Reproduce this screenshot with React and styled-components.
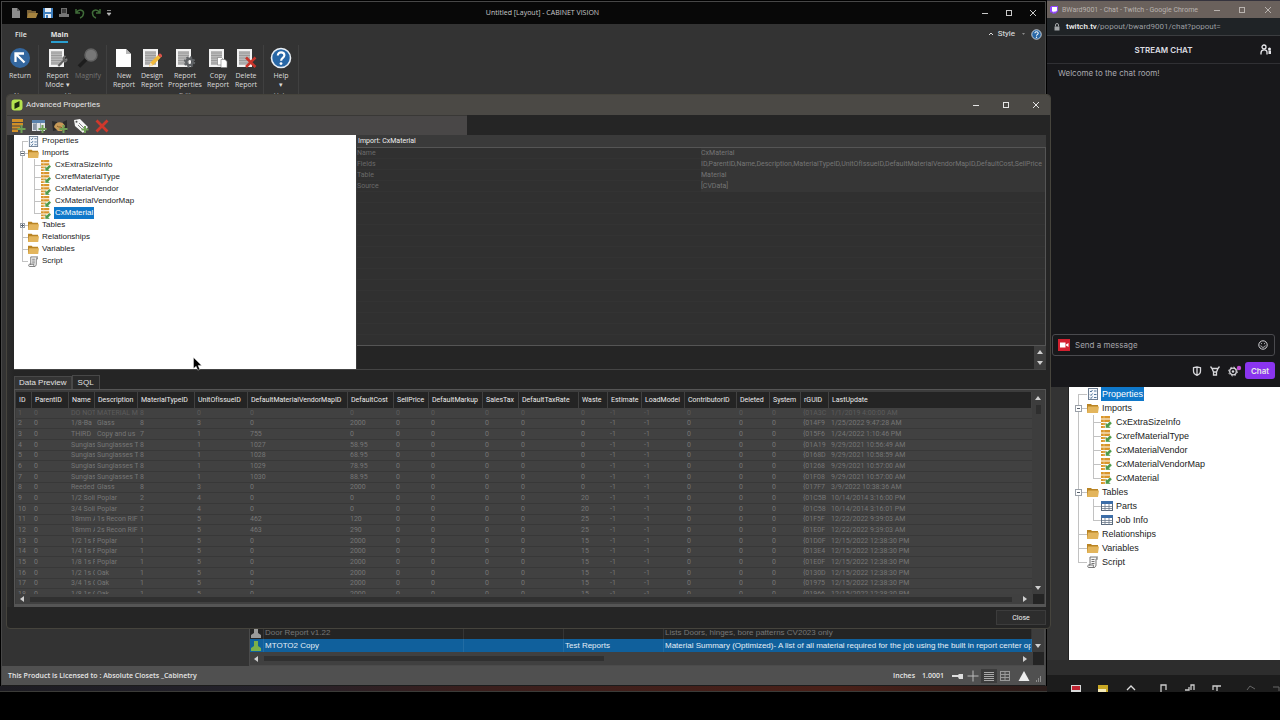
import React from "react";
import styled, { createGlobalStyle, css } from "styled-components";

const Global = createGlobalStyle`
  * { box-sizing: border-box; }
  body { margin: 0; background: #000; font-family: Roboto, "Liberation Sans", sans-serif; font-size: 8px; line-height: 10px; }
  button, input { font: inherit; color: inherit; background: none; border: 0; padding: 0; margin: 0; }
  ul { list-style: none; margin: 0; padding: 0; }
  svg { display: block; flex: none; }
`;

/* ---------- desktop ---------- */
const Desktop = styled.div`
  min-height: 100vh;
  display: flex;
  flex-direction: column;
  background: #000;
  color: #e6e6e6;
  overflow: hidden;
  padding-bottom: 28px;
`;
const Windows = styled.div`
  flex: 1;
  display: flex;
  min-height: 690px;
`;
const LeftSide = styled.div`
  flex: 1;
  min-width: 0;
  display: flex;
  flex-direction: column;
`;
const RightSide = styled.div`
  width: 233px;
  display: flex;
  flex-direction: column;
  background: #333;
`;
const Wallpaper = styled.div`
  height: 6px;
  background: linear-gradient(90deg, #1d1c22, #24222b 25%, #3a1f1d 45%, #4a2018 80%, #2a1c1a);
  border-bottom: 1px solid #3b3b38;
`;

/* ---------- application window ---------- */
const AppWindow = styled.section`
  position: relative;
  flex: 1;
  display: flex;
  flex-direction: column;
  margin: 1px 1px 0;
  border: 1px solid #474747;
  border-bottom-color: #1c1c1c;
  background: #333;
`;
const TitleBar = styled.header`
  height: 22px;
  display: flex;
  align-items: center;
  background: #080808;
  color: #c8c8c8;
  padding-left: 8px;
`;
const QuickBar = styled.div`
  display: flex;
  align-items: center;
  gap: 4px;
`;
const WindowTitle = styled.h1`
  flex: 1;
  margin: 0;
  text-align: center;
  font-family: "Open Sans", sans-serif;
  font-size: 7px;
  font-weight: 400;
`;
const WindowButtons = styled.div`
  display: flex;
`;
const GlyphButton = styled.button`
  width: ${(p) => p.$w || 12}px;
  height: 12px;
  display: flex;
  align-items: center;
  justify-content: center;
`;
const RibbonTabs = styled.nav`
  height: 21px;
  display: flex;
  align-items: flex-end;
  padding: 0 3px 2px 13px;
  font-family: "Open Sans", sans-serif;
  font-size: 7px;
`;
const RibbonTab = styled.button`
  height: 16px;
  margin-right: 24px;
  padding-top: 2px;
  font-weight: ${(p) => (p.$active ? 700 : 600)};
  border-bottom: 2px solid ${(p) => (p.$active ? "#2b9fd0" : "transparent")};
`;
const RibbonTools = styled.div`
  margin-left: auto;
  display: flex;
  align-items: center;
  gap: 4px;
  height: 18px;
`;
const StyleButton = styled.button`
  font-family: Roboto, sans-serif;
  font-size: 8px;
`;
const Ribbon = styled.div`
  display: flex;
  height: 56px;
`;
const RibbonGroup = styled.div`
  display: flex;
  flex-direction: column;
  padding: 2px 3px 0;
  border-right: 1px solid #404040;
`;
const RibbonRow = styled.div`
  display: flex;
  height: 44px;
`;
const GroupName = styled.span`
  text-align: center;
  font-size: 7px;
  line-height: 10px;
  color: #aaa;
`;
const RibbonButton = styled.button`
  width: ${(p) => p.$w}px;
  display: flex;
  flex-direction: column;
  align-items: center;
  gap: 2px;
  font-family: "Open Sans", sans-serif;
  font-size: 7px;
  line-height: 9px;
  white-space: pre;
  color: ${(p) => (p.disabled ? "#747474" : "#dcdcdc")};
`;

/* ---------- report list and status bar ---------- */
const Workspace = styled.div`
  flex: 1;
  display: flex;
  flex-direction: column;
  justify-content: flex-end;
`;
const ReportList = styled.div`
  margin-left: 247px;
  border: 1px solid #4b4b4b;
  background: #262626;
`;
const ReportBody = styled.div`
  display: flex;
`;
const ReportTable = styled.table`
  width: 100%;
  min-width: 0;
  table-layout: fixed;
  border-collapse: separate;
  border-spacing: 0;
  font-family: "Liberation Sans", sans-serif;
  font-size: 8px;
`;
const ReportRow = styled.tr`
  height: 13px;
  background: ${(p) => (p.$selected ? "#10609c" : "#242424")};
  color: ${(p) => (p.$selected ? "#e4eef6" : "#777")};
`;
const ReportCell = styled.td`
  width: ${(p) => (p.$w ? p.$w + "px" : "auto")};
  padding: 0 1px;
  white-space: nowrap;
  overflow: hidden;
  border-right: 1px solid rgba(255, 255, 255, 0.08);
`;
const StatusBar = styled.footer`
  height: 19px;
  display: flex;
  align-items: center;
  gap: 7px;
  padding: 0 2px 0 6px;
  background: #505050;
  font-family: "Open Sans", sans-serif;
  font-size: 7px;
  font-weight: 600;
`;
const Spacer = styled.span`
  flex: 1;
`;

/* ---------- scroll bars ---------- */
const VBar = styled.div`
  width: 12px;
  flex: none;
  display: flex;
  flex-direction: column;
  align-items: center;
  justify-content: space-between;
  padding: 3px 0;
  background: #3d3d3d;
`;
const HBar = styled.div`
  height: ${(p) => p.$h}px;
  display: flex;
  align-items: center;
  gap: 5px;
  padding-left: 3px;
  background: #404040;
`;
const HThumb = styled.div`
  width: ${(p) => p.$w};
  height: 5px;
  background: #303030;
`;
const Corner = styled.div`
  width: 11px;
  height: 100%;
  background: #242424;
`;
const VThumb = styled.div`
  width: 5px;
  height: 9px;
  background: #2e2e2e;
  margin: 4px 0 auto;
`;

/* ---------- dialog ---------- */
const Dialog = styled.section`
  position: absolute;
  top: 92px;
  bottom: 56px;
  left: 4px;
  right: -6px;
  display: flex;
  flex-direction: column;
  border: 1px solid #46443d;
  border-radius: 4px;
  background: #252525;
  overflow: hidden;
`;
const DialogTitle = styled.header`
  height: 20px;
  display: flex;
  align-items: center;
  gap: 3px;
  padding-left: 4px;
  background: #4b4945;
`;
const DialogToolbar = styled.div`
  height: 20px;
  display: flex;
  align-items: center;
  gap: 5px;
  width: 460px;
  padding: 0 3px;
  background: #494747;
  border-top: 1px solid #393836;
`;
const DialogBody = styled.div`
  flex: 1;
  min-height: 0;
  display: flex;
  flex-direction: column;
  padding: 0 4px 0 7px;
  gap: 5px;
  background: linear-gradient(90deg, #2c2c2c 0, #252525 7px);
`;
const Split = styled.div`
  flex: 1;
  min-height: 0;
  display: grid;
  grid-template-columns: 342px 1fr;
  border-bottom: 1px solid #444;
`;
const TreePane = styled.div`
  background: #fff;
  color: #1c1c1c;
`;
const PropertyPane = styled.div`
  min-width: 0;
  display: flex;
  flex-direction: column;
  background: #3a3a3a;
  padding-left: 1px;
`;
const PropertyHead = styled.h2`
  margin: 0;
  padding: 0 1px;
  font-size: 7px;
  font-weight: 400;
  line-height: 12px;
  color: #f0f0f0;
`;
const PropertySheet = styled.div`
  flex: 1;
  border: 1px solid #555;
  border-left: 0;
  background: repeating-linear-gradient(#303030 0 10px, #333 10px 11px);
`;
const PropertyList = styled.dl`
  margin: 0;
  display: grid;
  grid-template-columns: 1fr 1fr;
  font-size: 7px;
  line-height: 11px;
  color: #757575;
`;
const PropertyName = styled.dt`
  color: #6a6a6a;
  height: 11px;
`;
const PropertyValue = styled.dd`
  margin: 0;
  height: 11px;
  white-space: nowrap;
  overflow: hidden;
  background: #363636;
`;
const PropertyHelp = styled.div`
  height: 23px;
  display: flex;
  justify-content: flex-end;
  background: #252525;
`;
const TabStrip = styled.div`
  height: 14px;
  display: flex;
  align-items: flex-end;
`;
const Tab = styled.button`
  height: ${(p) => (p.$active ? 13 : 14)}px;
  padding: 0 ${(p) => (p.$active ? 4 : 5)}px;
  border: 1px solid #484848;
  border-bottom: 0;
  background: ${(p) => (p.$active ? "#343434" : "#2a2a2a")};
  font-family: "Liberation Sans", sans-serif;
  color: #e2e2e2;
`;
const GridFrame = styled.div`
  border: 1px solid #555;
  border-bottom-width: 3px;
  background: #3c3c3c;
  padding: 2px 1px 0;
`;
const GridView = styled.div`
  display: flex;
  height: 202px;
  overflow: hidden;
`;
const DataTable = styled.table`
  width: 100%;
  min-width: 0;
  align-self: flex-start;
  table-layout: fixed;
  border-collapse: separate;
  border-spacing: 0;
  font-size: 7px;
  line-height: 9px;
  background: #414141;
`;
const HeadCell = styled.th`
  width: ${(p) => (p.$w ? p.$w + "px" : "auto")};
  height: 16px;
  padding: 0 0 0 3px;
  text-align: left;
  font-weight: 400;
  white-space: nowrap;
  background: #242424;
  border-right: 1px solid #414141;
  color: #ececec;
`;
const DataRow = styled.tr`
  height: 11px;
  color: ${(p) => (p.$dim ? "#5c5c5c" : "#767676")};
  &:nth-child(3n + 2) { height: 10px; }
`;
const DataCell = styled.td`
  padding: 0 1px 0 2px;
  white-space: nowrap;
  overflow: hidden;
  border-bottom: 1px solid #383838;
`;
const DialogFooter = styled.footer`
  height: 21px;
  display: flex;
  align-items: center;
  justify-content: flex-end;
  padding-right: 4px;
`;
const CloseButton = styled.button`
  width: 50px;
  height: 15px;
  border: 1px solid #3c3c3c;
  background: #2d2d2d;
  font-size: 7px;
  color: #f0f0f0;
`;
const Pointer = styled.svg`
  position: absolute;
  left: 191px;
  top: 355px;
`;

/* ---------- tree ---------- */
const line = "linear-gradient(#c2c2c2, #c2c2c2)";
const Tree = styled.ul`
  font-family: "Liberation Sans", sans-serif;
  font-size: ${(p) => (p.$large ? 9 : 8)}px;
  line-height: ${(p) => (p.$large ? 14 : 12)}px;
`;
const TreeRow = styled.li`
  display: flex;
  align-items: center;
  height: ${(p) => (p.$large ? 14 : 12)}px;
`;
const Gutter = styled.span`
  height: 100%;
  flex: none;
  display: flex;
  align-items: center;
  width: ${(p) => (p.$child ? (p.$large ? 14 : 13) : p.$large ? 18 : 14)}px;
  padding-left: 6px;
  ${(p) => {
    const x = p.$child ? 6 : p.$large ? 9 : 8;
    const v = p.$part === "first" ? `${x}px 100% / 1px 50%` : p.$part === "last" ? `${x}px 0 / 1px 50%` : `${x}px 0 / 1px 100%`;
    return css`
      background: ${line} ${v} no-repeat${p.$branch ? `, ${line} ${x}px 50% / 20px 1px no-repeat` : ""};
    `;
  }}
`;
const Toggle = styled.button`
  width: ${(p) => (p.$large ? 7 : 5)}px;
  height: ${(p) => (p.$large ? 7 : 5)}px;
  border: 1px solid #9aa0a8;
  background: linear-gradient(#56606c, #56606c) center / 3px 1px no-repeat,
    ${(p) => (p.$open ? "" : "linear-gradient(#56606c, #56606c) center / 1px 3px no-repeat,")} #fff;
`;
const TreeLabel = styled.span`
  margin-left: 2px;
  padding: 0 1px;
  ${(p) =>
    p.$selected &&
    css`
      background: #0f78ca;
      color: #fff;
    `}
`;

/* ---------- chat window ---------- */
const ChatWindow = styled.section`
  flex: 1;
  display: flex;
  flex-direction: column;
  background: #18181b;
  font-family: Inter, sans-serif;
`;
const ChatTitle = styled.header`
  height: 18px;
  display: flex;
  align-items: center;
  gap: 4px;
  padding-left: 3px;
  background: #6a615c;
  border-top: 1px solid #35333d;
  font-family: Roboto, sans-serif;
  font-size: 7px;
  color: #b9b3af;
  white-space: nowrap;
`;
const Address = styled.div`
  height: 18px;
  display: flex;
  align-items: center;
  gap: 6px;
  padding: 0 7px;
  background: #1f2326;
  border-bottom: 1px solid #3b3d40;
  font-family: Roboto, sans-serif;
  color: #9a9da0;
  b { color: #f1f1f1; font-weight: 500; }
`;
const ChatHeader = styled.div`
  height: 28px;
  display: grid;
  grid-template-columns: 1fr auto 1fr;
  align-items: center;
  padding: 0 8px;
  border-bottom: 1px solid #303034;
  h2 { margin: 0; font-size: 8px; font-weight: 600; color: #dedee3; }
  button { justify-self: end; }
`;
const ChatLog = styled.div`
  flex: 1;
  padding: 4px 11px;
  color: #a9a9b0;
`;
const MessageBox = styled.label`
  display: flex;
  align-items: center;
  gap: 5px;
  height: 22px;
  margin: 0 5px;
  padding: 0 6px 0 5px;
  border: 1px solid #4a4a4e;
  border-radius: 3px;
  input { flex: 1; min-width: 0; outline: 0; }
  input::placeholder { color: #a4a4aa; opacity: 1; }
`;
const ChatActions = styled.div`
  display: flex;
  align-items: center;
  justify-content: flex-end;
  gap: 8px;
  padding: 6px 5px 8px;
`;
const ChatButton = styled.button`
  width: 30px;
  height: 17px;
  margin-left: -6px;
  border-radius: 3px;
  background: #8a34ef;
  font-weight: 600;
`;
const BackTree = styled.section`
  height: 273px;
  margin-left: 21px;
  border-left: 1px solid #222;
  background: #fff;
  color: #1c1c1c;
`;
const DockGap = styled.div`
  height: 15px;
  background: #2d2d2d;
`;
const Dock = styled.div`
  height: 17px;
  display: flex;
  align-items: flex-end;
  padding-left: 24px;
  background: #1c1c1c;
  overflow: hidden;
`;

/* ---------- drawings ---------- */
const Folder = ({ s }) => (
  <svg width={s} height={s} viewBox="0 0 12 12">
    <path d="M0 2h4l1 1h6v8H0z" fill="#b98424" />
    <path d="M1 4.500h11l-1 6.500H0z" fill="#e3b55c" />
  </svg>
);
const PropsIcon = ({ s }) => (
  <svg width={s} height={s} viewBox="0 0 12 12" fill="none">
    <rect x="1.500" y="0.500" width="9" height="11" fill="#f4f7fb" stroke="#6f7f93" />
    <path d="M3 3l1 1 1.500-2M3 6.500l1 1L5.500 5.500M3 9.500l1 1L5.500 8.500M7 3h2.500M7 6.500h2.500M7 9.500h2.500" stroke="#3f6790" strokeWidth="0.900" />
  </svg>
);
const ImportIcon = ({ s }) => (
  <svg width={s} height={s} viewBox="0 0 12 12">
    <path d="M0 0h9v2.500H0zM0 3.500h9V6H0zM0 7h6v2H0zM0 10h4v2H0z" fill="#d9952b" />
    <path d="M3 0v12" stroke="#f5d9a3" strokeWidth="0.500" />
    <path d="M4.500 12V6.500l1.600 1.600L9 5.200 11 7.200 8.200 10.300 9.900 12z" fill="#4e9a4a" stroke="#fff" strokeWidth="0.400" />
  </svg>
);
const TableIcon = ({ s }) => (
  <svg width={s} height={s} viewBox="0 0 12 12" fill="none">
    <rect x="0.500" y="1.500" width="11" height="9" fill="#fff" stroke="#5a6a7c" />
    <path d="M0 1h12v3H0z" fill="#3d6ea8" />
    <path d="M4 4v7M8 4v7M1 6.500h10M1 8.500h10" stroke="#6c7a8a" strokeWidth="0.800" />
  </svg>
);
const ScriptIcon = ({ s }) => (
  <svg width={s} height={s} viewBox="0 0 12 12" fill="none" stroke="#666" strokeWidth="0.900">
    <path d="M3 1h7.500c-1 0-1 2 0 2H9v6c0 1.500-1 2.500-2 2.500H1.500C.5 11.500.5 9 1.500 9H3z" fill="#f6f6f6" />
    <path d="M4.500 3.500h3M4.500 5.500h3M4.500 7.500h3M2 9h4.500c-.5 1 0 2.500.8 2.500" />
  </svg>
);
const treeIcons = { props: PropsIcon, folder: Folder, import: ImportIcon, table: TableIcon, script: ScriptIcon };

const Arrow = ({ dir, c = "#cfcfcf" }) => {
  const d = { up: "M0 5l3-4 3 4z", down: "M0 1l3 4 3-4z", left: "M5 0L1 3l4 3z", right: "M1 0l4 3-4 3z" }[dir];
  return (
    <svg width="6" height="6" viewBox="0 0 6 6"><path d={d} fill={c} /></svg>
  );
};
const MinGlyph = () => <svg width="8" height="8" viewBox="0 0 8 8"><path d="M1 4.500h6" stroke="currentColor" /></svg>;
const MaxGlyph = () => <svg width="8" height="8" viewBox="0 0 8 8"><rect x="1.500" y="1.500" width="5" height="5" fill="none" stroke="currentColor" /></svg>;
const CloseGlyph = () => <svg width="8" height="8" viewBox="0 0 8 8"><path d="M1 1l6 6M7 1L1 7" stroke="currentColor" /></svg>;

const ReportSheet = ({ children }) => (
  <svg width="22" height="22" viewBox="0 0 22 22" fill="none">
    <path d="M2 2h15v18H2z" fill="#f2f2f2" />
    <path d="M4 4h11v14H4z" fill="#b9b9b9" />
    <path d="M4 6h11M4 8.500h11M4 11h11M4 13.500h11M4 16h11" stroke="#929292" strokeWidth="0.800" />
    {children}
  </svg>
);
const ReturnIcon = () => (
  <svg width="22" height="22" viewBox="0 0 22 22" fill="none">
    <circle cx="11" cy="11" r="10" fill="#34679f" />
    <path d="M6.500 15V6.500H15M7 7l8.500 8.500" stroke="#fff" strokeWidth="2.300" />
  </svg>
);
const Wrench = () => <path d="M10.500 18l5-5c-1-2.500 1-4.500 3-4l-1.500 2 1 1.500 2-.8c.6 2.300-1.300 4-3.300 3.300L12 20z" fill="#5f5f5f" stroke="#ddd" strokeWidth="0.300" />;
const Pencil = () => (
  <g>
    <path d="M8 19.500l1.500-4L17 8l2.800 2.600-7.800 7.700z" fill="#f1b93a" />
    <path d="M17 8l1.300-1.300c1-.8 3.200 1 2.700 2.500l-1.200 1.400z" fill="#d9534a" />
    <path d="M8 19.500l1.500-4 2.500 2.800z" fill="#f6dfb5" />
  </g>
);
const Gear = () => (
  <g>
    <circle cx="15.500" cy="15" r="3.200" stroke="#5f6265" strokeWidth="2.600" />
    <circle cx="15.500" cy="15" r="4.900" stroke="#5f6265" strokeWidth="1.600" strokeDasharray="2 1.850" />
  </g>
);
const Copies = () => (
  <g fill="#fff" stroke="#777" strokeWidth="0.600">
    <path d="M10.500 10.500h4l1.500 1.500v6h-5.500z" />
    <path d="M14 12.500h4l2 2v6h-6z" />
  </g>
);
const Cross = () => <path d="M11 10.500l9.500 9.500M20.500 10.500L11 20" stroke="#c8352b" strokeWidth="2.600" />;
const NewIcon = () => (
  <svg width="22" height="22" viewBox="0 0 22 22">
    <path d="M3 2h10l5 5v13H3z" fill="#fff" /><path d="M13 2v5h5z" fill="#b8b8b8" />
  </svg>
);
const MagnifyIcon = () => (
  <svg width="22" height="22" viewBox="0 0 22 22" fill="none">
    <path d="M2 19.500l7-7" stroke="#1d1d1d" strokeWidth="3.500" />
    <circle cx="14" cy="8" r="6" fill="#777" stroke="#626262" strokeWidth="1.500" />
  </svg>
);
const HelpIcon = ({ s }) => (
  <svg width={s} height={s} viewBox="0 0 22 22" fill="none">
    <circle cx="11" cy="11" r="9.500" fill="#2867a6" stroke="#e9eff5" strokeWidth="1.600" />
    <path d="M7.800 8.500c0-4.300 6.600-4 6.600-.2 0 2.500-3.300 2.600-3.300 5.400" stroke="#fff" strokeWidth="2.100" />
    <circle cx="11" cy="16.600" r="1.400" fill="#fff" />
  </svg>
);
const Small = ({ children }) => <svg width="16" height="16" viewBox="0 0 16 16" fill="none">{children}</svg>;

/* ---------- data ---------- */
const imports = ["CxExtraSizeInfo", "CxrefMaterialType", "CxMaterialVendor", "CxMaterialVendorMap", "CxMaterial"].map((t) => ({ t, icon: "import" }));
const dialogTree = [
  { t: "Properties", icon: "props" },
  { t: "Imports", icon: "folder", open: true, kids: imports },
  { t: "Tables", icon: "folder", open: false },
  { t: "Relationships", icon: "folder" },
  { t: "Variables", icon: "folder" },
  { t: "Script", icon: "script" },
];
const backTree = dialogTree.map((n) =>
  n.t === "Tables" ? { ...n, open: true, kids: [{ t: "Parts", icon: "table" }, { t: "Job Info", icon: "table" }] } : n
);
const columns = [
  ["ID", 16], ["ParentID", 37], ["Name", 26], ["Description", 43], ["MaterialTypeID", 57], ["UnitOfIssueID", 53],
  ["DefaultMaterialVendorMapID", 100], ["DefaultCost", 46], ["SellPrice", 35], ["DefaultMarkup", 54], ["SalesTax", 36],
  ["DefaultTaxRate", 60], ["Waste", 29], ["Estimate", 34], ["LoadModel", 43], ["ContributorID", 52], ["Deleted", 33],
  ["System", 31], ["rGUID", 28], ["LastUpdate", 0],
];
const noon = "12/15/2022 12:38:30 PM";
const records = [
  ["DO NOT", "MATERIAL M", "8", "0", "0", "0", "0", "{01A3C", "1/1/2019 4:00:00 AM"],
  ["1/8-Ba", "Glass", "8", "3", "0", "2000", "0", "{014F9", "1/25/2022 9:47:28 AM"],
  ["THIRD", "Copy and us", "7", "1", "755", "0", "0", "{015F6", "1/24/2022 1:10:46 PM"],
  ["Sunglas", "Sunglasses T", "8", "1", "1027", "58.95", "0", "{01A19", "9/29/2021 10:56:49 AM"],
  ["Sunglas", "Sunglasses T", "8", "1", "1028", "68.95", "0", "{0168D", "9/29/2021 10:58:59 AM"],
  ["Sunglas", "Sunglasses T", "8", "1", "1029", "78.95", "0", "{01268", "9/29/2021 10:57:00 AM"],
  ["Sunglas", "Sunglasses T", "8", "1", "1030", "88.95", "0", "{01F08", "9/29/2021 10:57:00 AM"],
  ["Reeded", "Glass", "8", "3", "0", "2000", "0", "{017F7", "3/9/2022 10:38:36 AM"],
  ["1/2 Soli", "Poplar", "2", "4", "0", "0", "20", "{01C5B", "10/14/2014 3:16:00 PM"],
  ["3/4 Soli", "Poplar", "2", "4", "0", "0", "20", "{01C58", "10/14/2014 3:16:01 PM"],
  ["18mm A", "1s Recon RIF", "1", "5", "462", "120", "25", "{01F5F", "12/22/2022 9:39:03 AM"],
  ["18mm A", "2s Recon RIF", "1", "5", "463", "290", "25", "{01E0F", "12/22/2022 9:39:03 AM"],
  ["1/2 1s P", "Poplar", "1", "5", "0", "2000", "15", "{01D0F", noon],
  ["1/4 1s P", "Poplar", "1", "5", "0", "2000", "15", "{013E4", noon],
  ["1/8 1s P", "Poplar", "1", "5", "0", "2000", "15", "{01E0F", noon],
  ["1/2 1s O", "Oak", "1", "5", "0", "2000", "15", "{0130D", noon],
  ["3/4 1s O", "Oak", "1", "5", "0", "2000", "15", "{01975", noon],
  ["1/8 1s O", "Oak", "1", "5", "0", "2000", "15", "{01966", noon],
];
const toCells = ([name, desc, type, unit, map, cost, waste, guid, date], i) => [
  i + 1, "0", name, desc, type, unit, map, cost, "0", "0", "0", "0", waste, "-1", "-1", "0", "0", "0", guid, date,
];
const properties = [
  ["Name", "CxMaterial"],
  ["Fields", "ID,ParentID,Name,Description,MaterialTypeID,UnitOfIssueID,DefaultMaterialVendorMapID,DefaultCost,SellPrice"],
  ["Table", "Material"],
  ["Source", "[CVData]"],
];

function TreeView({ nodes, large, selected, label }) {
  const item = (n, isKid, part) => {
    const Icon = treeIcons[n.icon];
    return (
      <TreeRow key={(isKid ? "k" : "") + n.t} $large={large} role="treeitem">
        <Gutter $large={large} $branch={!isKid} $part={isKid ? "mid" : part}>
          {n.open !== undefined && <Toggle $large={large} $open={n.open} aria-label={"Toggle " + n.t} />}
        </Gutter>
        {isKid && <Gutter $large={large} $child $branch $part={part} />}
        <Icon s={large ? 12 : 11} />
        <TreeLabel $selected={n.t === selected}>{n.t}</TreeLabel>
      </TreeRow>
    );
  };
  return (
    <Tree $large={large} role="tree" aria-label={label}>
      {nodes.flatMap((n, i) => [
        item(n, false, i === 0 ? "first" : i === nodes.length - 1 ? "last" : "mid"),
        ...(n.kids || []).map((k, j) => item(k, true, j === n.kids.length - 1 ? "last" : "mid")),
      ])}
    </Tree>
  );
}

function AdvancedProperties() {
  return (
    <Dialog role="dialog" aria-label="Advanced Properties">
      <DialogTitle>
        <svg width="12" height="12" viewBox="0 0 12 12"><rect x="0.500" y="0.500" width="11" height="11" rx="3" fill="#b4e44e" /><path d="M3.500 4.500L8.500 2v5.500L3.500 10z" fill="#1b2a10" /></svg>
        <span>Advanced Properties</span>
        <Spacer />
        <GlyphButton $w={28} aria-label="Minimize"><MinGlyph /></GlyphButton>
        <GlyphButton $w={26} aria-label="Maximize"><MaxGlyph /></GlyphButton>
        <GlyphButton $w={28} aria-label="Close window"><CloseGlyph /></GlyphButton>
      </DialogTitle>
      <DialogToolbar>
        <button aria-label="Add import"><Small><path d="M2 1h11v3H2zM2 5h11v2.500H2zM2 8.500h8v2H2zM2 11.500h6V14H2z" fill="#d08f28" /><path d="M11.500 7v8M7.500 11h8" stroke="#6fa055" strokeWidth="2" /></Small></button>
        <button aria-label="Add table"><Small><path d="M1 2h13v11H1z" fill="#e2e5e8" /><path d="M1 2h13v3H1z" fill="#5b83ad" /><path d="M2 5.500h3V12H2z" fill="#8d99a8" /><path d="M5.500 5v8M9.500 5v8" stroke="#9aa3ad" /><path d="M11.500 7v8M7.500 11h8" stroke="#6fa055" strokeWidth="2" /></Small></button>
        <button aria-label="Add relationship"><Small><path d="M0 3l5 1v8l-4 1zM15 2l-4 2v7l4 2z" fill="#2a2a2a" /><path d="M2 9c1-5 8-7 11-1l-3 5H6z" fill="#c79a58" /><path d="M5 8c2 2 4 0 5 2" stroke="#7d5b2c" /><path d="M11.500 7v8M7.500 11h8" stroke="#6fa055" strokeWidth="2" /></Small></button>
        <button aria-label="Add variable"><Small><path d="M1 2l6-1 8 8-5 6-8-7z" fill="#f6f6f6" /><circle cx="3.500" cy="3.800" r="1" fill="#555" /><path d="M6 5l5 5M5 7l4 4" stroke="#777" strokeWidth="0.900" /><path d="M12 8v7M8.500 11.500h7" stroke="#6fa055" strokeWidth="2" /></Small></button>
        <button aria-label="Delete"><Small><path d="M2.500 2.500l11 11M13.500 2.500l-11 11" stroke="#d0382c" strokeWidth="2.800" /></Small></button>
      </DialogToolbar>
      <DialogBody>
        <Split>
          <TreePane><TreeView nodes={dialogTree} selected="CxMaterial" label="Report objects" /></TreePane>
          <PropertyPane>
            <PropertyHead>Import: CxMaterial</PropertyHead>
            <PropertySheet>
              <PropertyList>
                {properties.map(([k, v]) => (
                  <React.Fragment key={k}><PropertyName>{k}</PropertyName><PropertyValue>{v}</PropertyValue></React.Fragment>
                ))}
              </PropertyList>
            </PropertySheet>
            <PropertyHelp><VBar><Arrow dir="up" /><Arrow dir="down" /></VBar></PropertyHelp>
          </PropertyPane>
        </Split>
        <div>
          <TabStrip role="tablist">
            <Tab role="tab" $active aria-selected="true">Data Preview</Tab>
            <Tab role="tab" aria-selected="false">SQL</Tab>
          </TabStrip>
          <GridFrame>
            <GridView>
              <DataTable>
                <thead><tr>{columns.map(([name, w]) => <HeadCell key={name} $w={w}>{name}</HeadCell>)}</tr></thead>
                <tbody>
                  {records.map((r, i) => (
                    <DataRow key={i} $dim={i === 0}>{toCells(r, i).map((c, j) => <DataCell key={j}>{c}</DataCell>)}</DataRow>
                  ))}
                </tbody>
              </DataTable>
              <VBar><Arrow dir="up" /><VThumb /><Arrow dir="down" /></VBar>
            </GridView>
            <HBar $h={10}><Arrow dir="left" /><HThumb $w="97%" /><Spacer /><Arrow dir="right" /><Corner /></HBar>
          </GridFrame>
        </div>
      </DialogBody>
      <DialogFooter><CloseButton>Close</CloseButton></DialogFooter>
    </Dialog>
  );
}

function CabinetApp() {
  return (
    <AppWindow>
      <TitleBar>
        <QuickBar>
          <GlyphButton aria-label="New"><svg width="12" height="12" viewBox="0 0 12 12"><path d="M2 1h5l3 3v7H2z" fill="#8d8d8d" /><path d="M7 1v3h3z" fill="#5a5a5a" /></svg></GlyphButton>
          <GlyphButton aria-label="Open"><svg width="12" height="12" viewBox="0 0 12 12"><path d="M1 3h4l1 1h4v7H1z" fill="#7a6238" /><path d="M2.500 6H12l-2 5H1z" fill="#a5833f" /></svg></GlyphButton>
          <GlyphButton aria-label="Save"><svg width="12" height="12" viewBox="0 0 12 12"><path d="M1 1h10v10H1z" fill="#3f7fbe" /><path d="M3 1h6v4H3zM3 7h6v4H3z" fill="#e8eef4" /><path d="M4 8h2v3H4z" fill="#3f7fbe" /></svg></GlyphButton>
          <GlyphButton aria-label="Print"><svg width="12" height="12" viewBox="0 0 12 12"><path d="M3 1h6v6H3z" fill="#6f6f6f" /><path d="M4 2h4v4H4z" fill="#3c3c3c" /><path d="M1 7h10v3H1z" fill="#777" /></svg></GlyphButton>
          <GlyphButton aria-label="Undo"><svg width="12" height="12" viewBox="0 0 12 12" fill="none"><path d="M2 2v4h4M2.500 5.500C5 1.500 10 3 9.500 6.500 9.300 9 7.500 10.500 6 11" stroke="#3f6b38" strokeWidth="1.500" /></svg></GlyphButton>
          <GlyphButton aria-label="Redo"><svg width="12" height="12" viewBox="0 0 12 12" fill="none"><path d="M10 2v4H6M9.500 5.500C7 1.500 2 3 2.500 6.500 2.700 9 4.500 10.500 6 11" stroke="#3f6b38" strokeWidth="1.500" /></svg></GlyphButton>
          <GlyphButton $w={6} aria-label="Customize"><svg width="6" height="8" viewBox="0 0 6 8"><path d="M1 1.500h4M1 4h4L3 6.500z" fill="#bbb" stroke="#bbb" strokeWidth="0.700" /></svg></GlyphButton>
        </QuickBar>
        <WindowTitle>Untitled [Layout] - CABINET VISION</WindowTitle>
        <WindowButtons>
          <GlyphButton $w={24} aria-label="Minimize"><MinGlyph /></GlyphButton>
          <GlyphButton $w={24} aria-label="Maximize"><MaxGlyph /></GlyphButton>
          <GlyphButton $w={24} aria-label="Close"><CloseGlyph /></GlyphButton>
        </WindowButtons>
      </TitleBar>
      <RibbonTabs>
        <RibbonTab>File</RibbonTab>
        <RibbonTab $active>Main</RibbonTab>
        <RibbonTools>
          <svg width="6" height="6" viewBox="0 0 6 6"><path d="M1 4l2-2 2 2" fill="none" stroke="#ddd" /></svg>
          <StyleButton>Style</StyleButton>
          <svg width="8" height="6" viewBox="0 0 8 6"><path d="M3 2h3L4.500 4z" fill="#888" /></svg>
          <HelpIcon s={11} />
        </RibbonTools>
      </RibbonTabs>
      <Ribbon>
        <RibbonGroup>
          <RibbonRow><RibbonButton $w={30}><ReturnIcon />Return</RibbonButton></RibbonRow>
          <GroupName>Nav</GroupName>
        </RibbonGroup>
        <RibbonGroup>
          <RibbonRow>
            <RibbonButton $w={31}><ReportSheet><Wrench /></ReportSheet>{"Report\nMode ▾"}</RibbonButton>
            <RibbonButton $w={30} disabled><MagnifyIcon />Magnify</RibbonButton>
          </RibbonRow>
          <GroupName>View</GroupName>
        </RibbonGroup>
        <RibbonGroup>
          <RibbonRow>
            <RibbonButton $w={28}><NewIcon />{"New\nReport"}</RibbonButton>
            <RibbonButton $w={28}><ReportSheet><Pencil /></ReportSheet>{"Design\nReport"}</RibbonButton>
            <RibbonButton $w={38}><ReportSheet><Gear /></ReportSheet>{"Report\nProperties"}</RibbonButton>
            <RibbonButton $w={28}><ReportSheet><Copies /></ReportSheet>{"Copy\nReport"}</RibbonButton>
            <RibbonButton $w={28}><ReportSheet><Cross /></ReportSheet>{"Delete\nReport"}</RibbonButton>
          </RibbonRow>
          <GroupName>Edit</GroupName>
        </RibbonGroup>
        <RibbonGroup>
          <RibbonRow><RibbonButton $w={28}><HelpIcon s={22} />{"Help\n▾"}</RibbonButton></RibbonRow>
          <GroupName>Help</GroupName>
        </RibbonGroup>
      </Ribbon>
      <Workspace>
        <ReportList>
          <ReportBody>
            <ReportTable>
              <tbody>
                <ReportRow>
                  <ReportCell $w={14}><svg width="10" height="10" viewBox="0 0 10 10"><path d="M3 0h4v5l3 2v3H0V7l3-2z" fill="#9a9a9a" /></svg></ReportCell>
                  <ReportCell $w={200}>Door Report v1.22</ReportCell>
                  <ReportCell $w={100} />
                  <ReportCell $w={100} />
                  <ReportCell>Lists Doors, hinges, bore patterns CV2023 only</ReportCell>
                </ReportRow>
                <ReportRow $selected>
                  <ReportCell><svg width="10" height="10" viewBox="0 0 10 10"><path d="M3 0h4v5l3 2v3H0V7l3-2z" fill="#7ab04a" /></svg></ReportCell>
                  <ReportCell>MTOTO2 Copy</ReportCell>
                  <ReportCell />
                  <ReportCell>Test Reports</ReportCell>
                  <ReportCell>Material Summary (Optimized)- A list of all material required for the job using the built in report center optimizer</ReportCell>
                </ReportRow>
              </tbody>
            </ReportTable>
            <VBar><Spacer /><Arrow dir="down" /></VBar>
          </ReportBody>
          <HBar $h={13}><Arrow dir="left" /><HThumb $w="340px" /><Spacer /><Arrow dir="right" /><Corner /></HBar>
        </ReportList>
      </Workspace>
      <StatusBar>
        <span>This Product is Licensed to : Absolute Closets _Cabinetry</span>
        <Spacer />
        <span>Inches</span>
        <span>1.0001</span>
        <svg width="92" height="14" viewBox="0 0 92 14" fill="none">
          <path d="M1 6h6l1-1h4v5H8L7 8H1z" fill="#ddd" />
          <g transform="translate(3 0)">
            <path d="M19 1.500v11M13.500 7h11" stroke="#bbb" />
            <rect x="27" y="0" width="16" height="14" fill="#3c3c3c" />
            <path d="M30 3.500h10M30 5.500h10M30 7.500h10M30 9.500h10M30 11.500h10" stroke="#aaa" />
            <rect x="46.500" y="2.500" width="9" height="9" stroke="#999" /><path d="M51 2v10M46 5.500h10M46 8.500h10" stroke="#999" />
            <path d="M70 2l5.500 10h-11z" fill="#eee" />
            <path d="M86 12h1M84 12h1M82 12h1M84 10h1M86 10h1M86 8h1" stroke="#ccc" />
          </g>
        </svg>
      </StatusBar>
      <AdvancedProperties />
      <Pointer width="10" height="14" viewBox="0 0 10 14"><path d="M0.500 0.500v11l2.600-2.300 1.700 4 2-.8-1.700-4h3.500z" fill="#000" stroke="#fff" strokeWidth="0.400" /></Pointer>
    </AppWindow>
  );
}

function StreamChat() {
  return (
    <ChatWindow>
      <ChatTitle>
        <svg width="8" height="8" viewBox="0 0 8 8"><path d="M1 0h7v5L5.500 7.500H4L2.500 8V6.500H0v-5z" fill="#9146ff" /><path d="M2 1h5v3.500L6 5.500H4.500l-1 1v-1H2z" fill="#fff" /></svg>
        <span>BWard9001 - Chat - Twitch - Google Chrome</span>
        <Spacer />
        <GlyphButton $w={22} aria-label="Minimize"><MinGlyph /></GlyphButton>
        <GlyphButton $w={22} aria-label="Maximize"><MaxGlyph /></GlyphButton>
        <GlyphButton $w={24} aria-label="Close"><CloseGlyph /></GlyphButton>
      </ChatTitle>
      <Address>
        <svg width="6" height="8" viewBox="0 0 6 8" fill="none"><path d="M0.500 3.500h5v4h-5z" fill="#a3a6a8" /><path d="M1.500 3.500V2a1.500 1.500 0 013 0v1.500" stroke="#a3a6a8" /></svg>
        <span><b>twitch.tv</b>/popout/bward9001/chat?popout=</span>
      </Address>
      <ChatHeader>
        <span />
        <h2>STREAM CHAT</h2>
        <button aria-label="Community">
          <svg width="12" height="11" viewBox="0 0 12 11" fill="none"><circle cx="4" cy="3" r="2" stroke="#e6e6ea" strokeWidth="1.300" /><path d="M1 10.500V9c0-4 6-4 6-1v2.500" stroke="#e6e6ea" strokeWidth="1.300" /><circle cx="9.500" cy="5" r="1.500" fill="#e6e6ea" /><path d="M8.500 6.500H11V10H8.500z" fill="#e6e6ea" /></svg>
        </button>
      </ChatHeader>
      <ChatLog>Welcome to the chat room!</ChatLog>
      <MessageBox>
        <svg width="12" height="12" viewBox="0 0 12 12"><path d="M0 0h12v12H0z" fill="#d3202f" /><path d="M2 3.500h5.500v5H2zM8 5.500l2.500-1.500v4L8 6.500z" fill="#fff" /></svg>
        <input aria-label="Send a message" placeholder="Send a message" />
        <svg width="10" height="10" viewBox="0 0 10 10" fill="none" stroke="#d4d4d8"><circle cx="5" cy="5" r="4.200" /><path d="M2.800 5.500c.5 2.400 4 2.400 4.500 0M3.500 3.200v.9M6.500 3.200v.9" strokeWidth="0.900" /></svg>
      </MessageBox>
      <ChatActions>
        <button aria-label="Shield mode"><svg width="10" height="10" viewBox="0 0 10 10" fill="none" stroke="#d8d8dc" strokeWidth="1.300"><path d="M1.500 1.700L5 1l3.500.7V5c0 2.300-1.800 3.700-3.500 4.300C3.300 8.700 1.500 7.300 1.500 5zM5 1v8" /></svg></button>
        <button aria-label="Moderation"><svg width="10" height="10" viewBox="0 0 10 10" fill="none" stroke="#d8d8dc" strokeWidth="1.300"><path d="M0.500 0.500l1.500 2h6l1.500-2M2 2.500l1.500 3.500v3h3V6L8 2.500M3.500 6h3" /></svg></button>
        <button aria-label="Chat settings"><svg width="15" height="14" viewBox="0 0 15 14" fill="none"><circle cx="5" cy="7.500" r="3.300" stroke="#d8d8dc" strokeWidth="1.300" /><circle cx="5" cy="7.500" r="1.200" fill="#d8d8dc" /><circle cx="5" cy="7.500" r="4.400" stroke="#d8d8dc" strokeDasharray="1.600 1.850" /><circle cx="11" cy="4" r="2.200" fill="#c24fd6" /></svg></button>
        <ChatButton>Chat</ChatButton>
      </ChatActions>
    </ChatWindow>
  );
}

export default function App() {
  return (
    <Desktop>
      <Global />
      <Windows>
        <LeftSide>
          <CabinetApp />
          <Wallpaper />
        </LeftSide>
        <RightSide>
          <StreamChat />
          <BackTree><TreeView large nodes={backTree} selected="Properties" label="Project objects" /></BackTree>
          <DockGap />
          <Dock>
            <svg width="209" height="9" viewBox="0 0 209 9" fill="none">
              <path d="M0 2h10v7H0z" fill="#d8d8d8" /><path d="M1 3h8v4H1z" fill="#c02432" />
              <path d="M27 2h10v7H27z" fill="#c9a824" /><path d="M27 6h8v3h-8z" fill="#f3e9b8" />
              <path d="M56 7l4-4 4 4" stroke="#ddd" strokeWidth="1.300" />
              <path d="M90 9V2h5v5M114 7h4V4M120 7V2h3v5M142 7V3h8M146 3v5" stroke="#ccc" strokeWidth="1.300" />
              <path d="M176 7l3-4 5 3M202 4h6v4" stroke="#666" />
            </svg>
          </Dock>
        </RightSide>
      </Windows>
    </Desktop>
  );
}
